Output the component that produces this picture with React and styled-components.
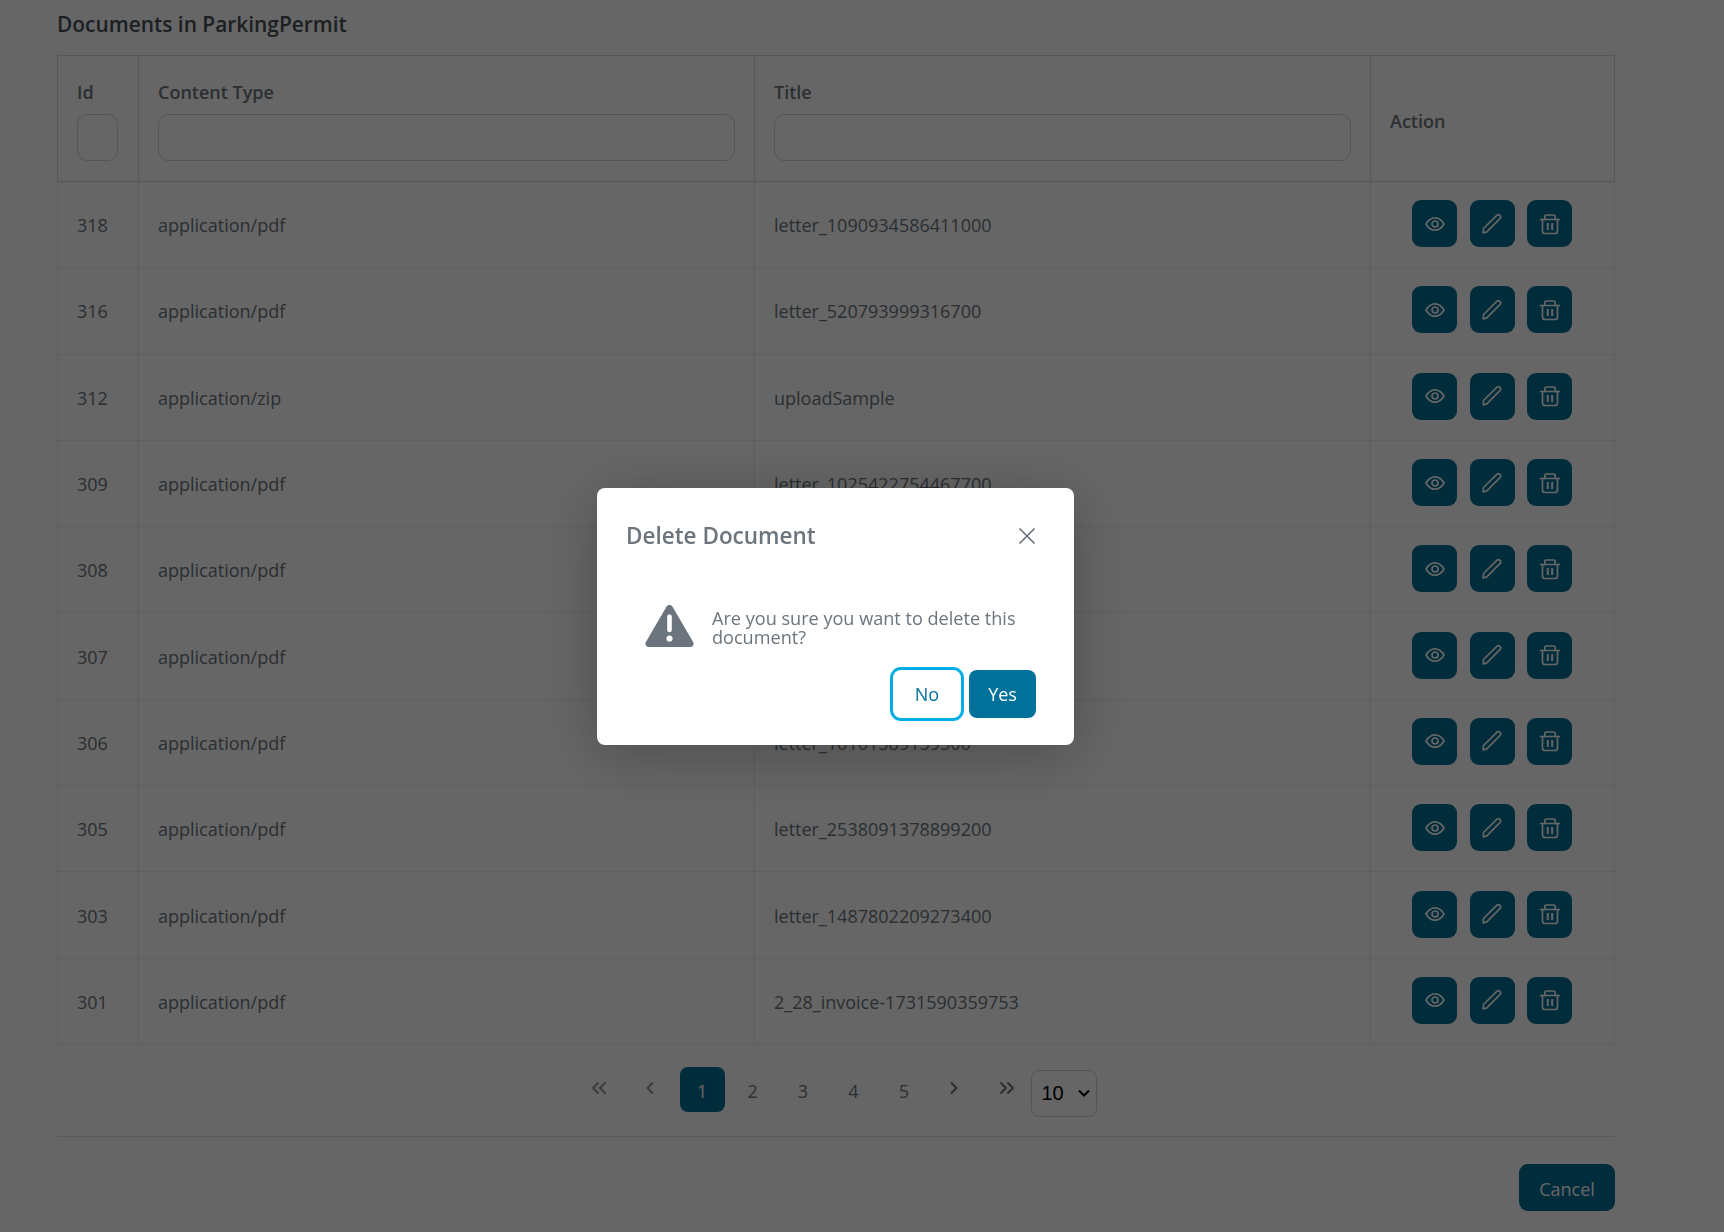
import React from "react";
import styled, { createGlobalStyle } from "styled-components";

const GlobalStyle = createGlobalStyle`
  html, body {
    margin: 0;
    height: 100%;
    overflow: hidden;
    background: #fff;
    font-family: "Open Sans", "Noto Sans", sans-serif;
    color: #6c757d;
  }
`;

const Page = styled.div`
  width: 1671px;
  box-sizing: border-box;
  padding: 8px 57px 0 57px;
`;

const Heading = styled.h2`
  margin: 0 0 15px;
  height: 32px;
  line-height: 32px;
  font-size: 20.9px;
  font-weight: 600;
  color: #495057;
`;

const Table = styled.table`
  width: 1557px;
  table-layout: fixed;
  border-collapse: collapse;
  font-size: 18px;
`;

const HeadCell = styled.th`
  height: 126px;
  padding: ${(p) => (p.$plain ? "4px 19px 0" : "0 19px")};
  box-sizing: border-box;
  border: 1px solid #d3dde2;
  text-align: left;
  vertical-align: middle;
  font-weight: 600;
  color: #6c757d;
`;

const FilterLabel = styled.div`
  line-height: 24px;
  margin-bottom: 10px;
  margin-top: 3px;
`;

const FilterInput = styled.input`
  display: block;
  width: ${(p) => (p.$narrow ? "41px" : "100%")};
  height: 47px;
  box-sizing: border-box;
  border: 1px solid #ced4da;
  border-radius: 10px;
  background: #fff;
`;

const Row = styled.tr`
  height: 86.3px;
`;

const Cell = styled.td`
  padding: ${(p) => (p.$actions ? "0 19.5px 2px 18.5px" : "1px 19px 0")};
  box-sizing: border-box;
  border: 1px solid #e9ecef;
  white-space: nowrap;
  overflow: hidden;
`;

const Actions = styled.div`
  display: flex;
  justify-content: center;
  gap: 12.5px;
`;

const IconButton = styled.button`
  width: 45px;
  height: 47px;
  padding: 0;
  display: flex;
  align-items: center;
  justify-content: center;
  border: none;
  border-radius: 9px;
  background: #006f94;
  color: #fff;
`;

const Pager = styled.div`
  display: flex;
  justify-content: center;
  align-items: flex-start;
  gap: 5.4px;
  margin-top: 22px;
  padding-left: 3.4px;
`;

const PageButton = styled.button`
  width: 45px;
  height: 45px;
  margin-left: ${(p) => (p.$active ? "2px" : "0")};
  padding: 4px 0 0;
  border: none;
  border-radius: 8px;
  font: inherit;
  font-size: 18px;
  background: ${(p) => (p.$active ? "#006f94" : "transparent")};
  color: ${(p) => (p.$active ? "#fff" : "#6c757d")};
`;

const ArrowButton = styled.button`
  width: 45px;
  height: 45px;
  margin-left: ${(p) => (p.$shift ? "2px" : "0")};
  padding: 0 0 3px;
  display: flex;
  align-items: center;
  justify-content: center;
  border: none;
  background: transparent;
  color: ${(p) => (p.$muted ? "#8f969c" : "#6c757d")};
`;

const SelectWrap = styled.div`
  position: relative;
  margin: 3px 0 0 -3px;
  height: 47px;
`;

const SizeSelect = styled.select`
  appearance: none;
  width: 66px;
  height: 47px;
  padding: 0 24px 0 9px;
  border: 1px solid #ced4da;
  border-radius: 8px;
  background: #fff;
  color: #000;
  font-family: "Liberation Sans", sans-serif;
  font-size: 20px;
`;

const SelectArrow = styled.svg`
  position: absolute;
  left: 47px;
  top: 19px;
  pointer-events: none;
`;

const Divider = styled.hr`
  width: 1558px;
  margin: 19px 0 0;
  border: none;
  border-top: 1px solid #dee2e6;
`;

const Footer = styled.div`
  display: flex;
  justify-content: flex-end;
  padding-top: 27px;
  margin-right: -1px;
`;

const CancelButton = styled.button`
  width: 96px;
  height: 47px;
  padding: 3px 0 0;
  border: none;
  border-radius: 9px;
  background: #006f94;
  color: #fff;
  font: inherit;
  font-size: 18px;
`;

const Overlay = styled.div`
  position: fixed;
  inset: 0;
  padding-right: 53px;
  display: flex;
  align-items: center;
  justify-content: center;
  background: rgba(0, 0, 0, 0.6);
`;

const Dialog = styled.div`
  width: 477px;
  height: 257px;
  margin-top: 1px;
  box-sizing: border-box;
  padding: 29px 38px 0 29px;
  border-radius: 8px;
  background: #fff;
  box-shadow: 0 10px 60px rgba(0, 0, 0, 0.25);
`;

const DialogHeader = styled.div`
  display: flex;
  align-items: center;
  justify-content: space-between;
  height: 36px;
`;

const DialogTitle = styled.div`
  font-size: 22.5px;
  font-weight: 600;
  color: #6c757d;
`;

const CloseButton = styled.button`
  display: flex;
  padding: 0;
  margin: 2px 0 0;
  border: none;
  background: none;
  color: #6c757d;
`;

const DialogBody = styled.div`
  display: flex;
  align-items: flex-start;
  gap: 18px;
  margin-top: 52px;
  padding-left: 19px;
`;

const Message = styled.div`
  width: 325px;
  padding-top: 4px;
  font-size: 18.1px;
  line-height: 19px;
`;

const DialogActions = styled.div`
  display: flex;
  justify-content: flex-end;
  gap: 8px;
  margin-top: 23px;
`;

const DialogButton = styled.button`
  height: 48px;
  width: ${(p) => (p.$primary ? "67px" : "68px")};
  padding: 0;
  border: none;
  border-radius: 8px;
  font: inherit;
  font-size: 18px;
  background: ${(p) => (p.$primary ? "#00719a" : "#fff")};
  color: ${(p) => (p.$primary ? "#fff" : "#00719a")};
  box-shadow: ${(p) => (p.$primary ? "none" : "0 0 0 3px #00aee6")};
`;

const EyeIcon = () => (
  <svg width="22" height="22" viewBox="0 0 22 22" fill="none" stroke="currentColor" strokeWidth="1.7">
    <path d="M2 11c2.200-4 5.300-6.200 9-6.200s6.800 2.200 9 6.200c-2.200 4-5.300 6.200-9 6.200S4.200 15 2 11z" strokeLinejoin="round" />
    <circle cx="11" cy="11" r="3" />
  </svg>
);

const PencilIcon = () => (
  <svg width="22" height="22" viewBox="0 0 22 22" fill="none" stroke="currentColor" strokeWidth="1.7" strokeLinejoin="round">
    <path d="M2.500 15.500L15.800 2.400a2.200 2.200 0 0 1 3.100 0a2.300 2.300 0 0 1 0 3.200L5.800 18.900L2.200 20z" />
  </svg>
);

const TrashIcon = () => (
  <svg width="22" height="22" viewBox="0 0 22 22" fill="none" stroke="currentColor" strokeWidth="1.7" strokeLinecap="round">
    <path d="M1.500 6.500h19" />
    <path d="M5.800 6.500V3.500C5.800 2.500 6.500 2 7.300 2h7.400c.8 0 1.500.5 1.500 1.500v3" />
    <path d="M3.500 6.500v11.500c0 1.500 1 2.500 2.500 2.500h10c1.500 0 2.500-1 2.500-2.500V6.500" />
    <path d="M8.800 10v7M13.200 10v7" strokeLinecap="butt" strokeWidth="2" />
  </svg>
);

const Chevrons = ({ dir, double }) => (
  <svg width="16" height="14" viewBox="0 0 16 14" fill="none" stroke="currentColor" strokeWidth="2" strokeLinecap="round" strokeLinejoin="round">
    <g transform={dir === "left" ? "" : "translate(16 0) scale(-1 1)"}>
      {double ? (
        <>
          <path d="M7 2L2 7l5 5" />
          <path d="M14 2L9 7l5 5" />
        </>
      ) : (
        <path d="M10.500 2l-5 5 5 5" />
      )}
    </g>
  </svg>
);

const WarningIcon = () => (
  <svg width="49" height="42" viewBox="0 0 49 42" style={{ flex: "none" }}>
    <path
      fillRule="evenodd"
      fill="#6c757d"
      d="M21.300 2c1.500-2.600 4.900-2.600 6.400 0l20.400 35c1.400 2.400-.2 5-3 5H3.900c-2.800 0-4.400-2.600-3-5zM22.200 11.500v13.500c0 1.300 1 2.300 2.300 2.300s2.300-1 2.300-2.300V11.500c0-1.300-1-2.300-2.300-2.300s-2.300 1-2.300 2.300zM24.500 30.400a3.100 3.100 0 1 0 0 6.200a3.100 3.100 0 0 0 0-6.200z"
    />
  </svg>
);

const documents = [
  { id: 318, type: "application/pdf", title: "letter_1090934586411000" },
  { id: 316, type: "application/pdf", title: "letter_520793999316700" },
  { id: 312, type: "application/zip", title: "uploadSample" },
  { id: 309, type: "application/pdf", title: "letter_1025422754467700" },
  { id: 308, type: "application/pdf", title: "letter_1018158915530000" },
  { id: 307, type: "application/pdf", title: "letter_1017892041193300" },
  { id: 306, type: "application/pdf", title: "letter_10101589159500" },
  { id: 305, type: "application/pdf", title: "letter_2538091378899200" },
  { id: 303, type: "application/pdf", title: "letter_1487802209273400" },
  { id: 301, type: "application/pdf", title: "2_28_invoice-1731590359753" },
];

function App() {
  return (
    <>
      <GlobalStyle />
      <Page>
        <Heading>Documents in ParkingPermit</Heading>
        <Table>
          <colgroup>
            <col style={{ width: 81 }} />
            <col style={{ width: 616 }} />
            <col style={{ width: 616 }} />
            <col style={{ width: 244 }} />
          </colgroup>
          <thead>
            <tr>
              <HeadCell>
                <FilterLabel>Id</FilterLabel>
                <FilterInput $narrow />
              </HeadCell>
              <HeadCell>
                <FilterLabel>Content Type</FilterLabel>
                <FilterInput />
              </HeadCell>
              <HeadCell>
                <FilterLabel>Title</FilterLabel>
                <FilterInput />
              </HeadCell>
              <HeadCell $plain>Action</HeadCell>
            </tr>
          </thead>
          <tbody>
            {documents.map((doc) => (
              <Row key={doc.id}>
                <Cell>{doc.id}</Cell>
                <Cell>{doc.type}</Cell>
                <Cell>{doc.title}</Cell>
                <Cell $actions>
                  <Actions>
                    <IconButton><EyeIcon /></IconButton>
                    <IconButton><PencilIcon /></IconButton>
                    <IconButton><TrashIcon /></IconButton>
                  </Actions>
                </Cell>
              </Row>
            ))}
          </tbody>
        </Table>
        <Pager>
          <ArrowButton $muted><Chevrons dir="left" double /></ArrowButton>
          <ArrowButton $muted><Chevrons dir="left" /></ArrowButton>
          <PageButton $active>1</PageButton>
          <PageButton>2</PageButton>
          <PageButton>3</PageButton>
          <PageButton>4</PageButton>
          <PageButton>5</PageButton>
          <ArrowButton><Chevrons dir="right" /></ArrowButton>
          <ArrowButton $shift><Chevrons dir="right" double /></ArrowButton>
          <SelectWrap>
            <SizeSelect defaultValue="10">
              <option>10</option>
              <option>20</option>
              <option>50</option>
            </SizeSelect>
            <SelectArrow width="12" height="8" viewBox="0 0 12 8" fill="none" stroke="#000" strokeWidth="2">
              <path d="M1 1.500l5 5 5-5" />
            </SelectArrow>
          </SelectWrap>
        </Pager>
        <Divider />
        <Footer>
          <CancelButton>Cancel</CancelButton>
        </Footer>
      </Page>
      <Overlay>
        <Dialog>
          <DialogHeader>
            <DialogTitle>Delete Document</DialogTitle>
            <CloseButton>
              <svg width="18" height="18" viewBox="0 0 18 18" stroke="currentColor" strokeWidth="1.7" strokeLinecap="round">
                <path d="M2 2l14 14M16 2L2 16" />
              </svg>
            </CloseButton>
          </DialogHeader>
          <DialogBody>
            <WarningIcon />
            <Message>Are you sure you want to delete this document?</Message>
          </DialogBody>
          <DialogActions>
            <DialogButton>No</DialogButton>
            <DialogButton $primary>Yes</DialogButton>
          </DialogActions>
        </Dialog>
      </Overlay>
    </>
  );
}

export default App;
